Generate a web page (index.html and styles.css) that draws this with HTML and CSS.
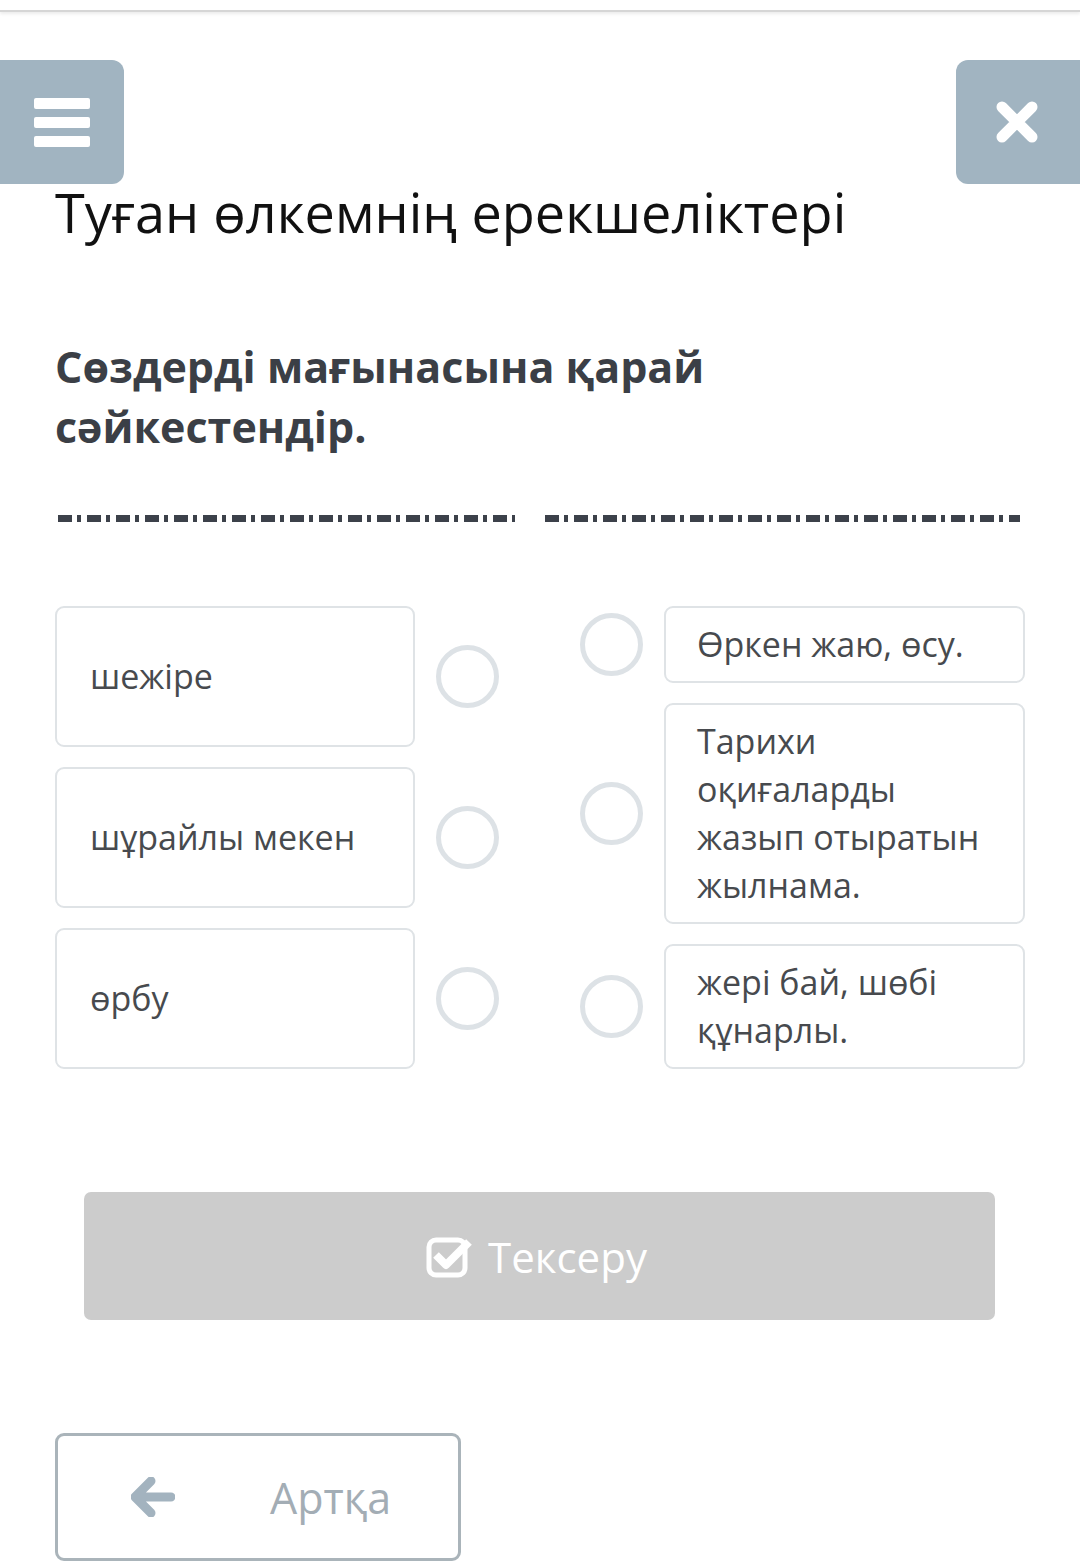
FILE: index.html
```html
<!DOCTYPE html>
<html lang="kk">
<head>
  <meta charset="UTF-8">
  <meta name="viewport" content="width=device-width, initial-scale=1.0">
  <title>Туған өлкемнің ерекшеліктері</title>
  <link rel="stylesheet" href="styles.css">
</head>
<body>
  <div class="topbar"></div>

  <!-- Header buttons -->
  <header class="header">
    <button class="icon-btn menu-btn" aria-label="Menu">
      <span></span><span></span><span></span>
    </button>
    <button class="icon-btn close-btn" aria-label="Close">
      <svg width="44" height="44" viewBox="0 0 44 44">
        <path d="M7 7 L37 37 M37 7 L7 37" stroke="#fff" stroke-width="11" stroke-linecap="round"/>
      </svg>
    </button>
  </header>

  <main class="content">
    <h1 class="title">Туған өлкемнің ерекшеліктері</h1>
    <h2 class="task">Сөздерді мағынасына қарай сәйкестендір.</h2>

    <div class="dashes">
      <div class="dash-line short"></div>
      <div class="dash-line long"></div>
    </div>

    <!-- Matching columns -->
    <div class="match">
      <div class="match-col left">
        <div class="match-row">
          <div class="card card-fixed">шежіре</div>
          <span class="dot"></span>
        </div>
        <div class="match-row">
          <div class="card card-fixed">шұрайлы мекен</div>
          <span class="dot"></span>
        </div>
        <div class="match-row">
          <div class="card card-fixed">өрбу</div>
          <span class="dot"></span>
        </div>
      </div>

      <div class="match-col right">
        <div class="match-row">
          <span class="dot"></span>
          <div class="card">Өркен жаю, өсу.</div>
        </div>
        <div class="match-row">
          <span class="dot"></span>
          <div class="card">Тарихи оқиғаларды жазып отыратын жылнама.</div>
        </div>
        <div class="match-row">
          <span class="dot"></span>
          <div class="card">жері бай, шөбі құнарлы.</div>
        </div>
      </div>
    </div>

    <button class="check-btn">
      <svg width="48" height="44" viewBox="0 0 48 44">
        <rect x="3" y="6" width="36" height="35" rx="7" fill="none" stroke="#fff" stroke-width="5"/>
        <path d="M10 21 L20 31 L43 8" fill="none" stroke="#fff" stroke-width="8" stroke-linejoin="round"/>
      </svg>
      <span>Тексеру</span>
    </button>

    <button class="back-btn">
      <svg width="44" height="40" viewBox="0 0 44 40">
        <path d="M20 4 L4 20 L20 36 M6 20 L40 20" fill="none" stroke="#a3b3bf" stroke-width="9" stroke-linecap="round" stroke-linejoin="round"/>
      </svg>
      <span>Артқа</span>
    </button>
  </main>
</body>
</html>
```

FILE: styles.css
```css
* {
  margin: 0;
  padding: 0;
  box-sizing: border-box;
}

body {
  font-family: 'Open Sans', 'Noto Sans', sans-serif;
  background: #fff;
  width: 1080px;
  min-height: 1566px;
  overflow: hidden;
}

.topbar {
  height: 12px;
  border-bottom: 2px solid #d6d6d6;
  box-shadow: 0 2px 3px rgba(0, 0, 0, 0.08);
}

.header {
  display: flex;
  justify-content: space-between;
  margin-top: 48px;
}

.icon-btn {
  width: 124px;
  height: 124px;
  border: none;
  background: #a1b4c1;
  display: flex;
  align-items: center;
  justify-content: center;
}

.menu-btn {
  border-radius: 0 12px 12px 0;
  flex-direction: column;
  gap: 8px;
}

.menu-btn span {
  display: block;
  width: 56px;
  height: 11px;
  background: #fff;
  border-radius: 2px;
}

.close-btn {
  border-radius: 12px 0 0 12px;
  padding-right: 2px;
}

.content {
  padding: 0 55px;
}

.title {
  margin-top: -2px;
  font-weight: 400;
  font-size: 54px;
  line-height: 60px;
  color: #111;
}

.task {
  margin-top: 95px;
  font-weight: 700;
  font-size: 43px;
  line-height: 60px;
  color: #3b3f46;
  width: 720px;
}

/* garbled divider line */
.dashes {
  display: flex;
  gap: 30px;
  margin-top: 58px;
  padding-left: 3px;
}

.dash-line {
  height: 7px;
  background:
    repeating-linear-gradient(90deg, #3c414a 0 14px, transparent 14px 19px, #3c414a 19px 23px, transparent 23px 29px),
    #fff;
}

.dash-line.short {
  width: 457px;
}

.dash-line.long {
  width: 475px;
}

.match {
  display: flex;
  justify-content: space-between;
  align-items: flex-start;
  margin-top: 84px;
}

.match-col {
  display: flex;
  flex-direction: column;
  gap: 20px;
}

.match-row {
  display: flex;
  align-items: center;
  gap: 21px;
}

.card {
  width: 361px;
  border: 2px solid #dfe3e6;
  border-radius: 9px;
  padding: 12px 28px 13px 31px;
  font-size: 34px;
  line-height: 48px;
  color: #474a4e;
  background: #fff;
}

.card-fixed {
  width: 360px;
  height: 141px;
  display: flex;
  align-items: center;
  padding-left: 33px;
}

.dot {
  width: 63px;
  height: 63px;
  border: 5px solid #dde2e6;
  border-radius: 50%;
  flex-shrink: 0;
}

.check-btn {
  display: flex;
  align-items: center;
  justify-content: center;
  gap: 14px;
  width: 911px;
  height: 128px;
  margin: 123px 0 0 29px;
  border: none;
  border-radius: 7px;
  background: #cccccc;
  color: #fff;
  font-family: inherit;
  font-size: 42px;
  padding-right: 6px;
}

.back-btn {
  display: flex;
  align-items: center;
  gap: 95px;
  width: 406px;
  height: 128px;
  margin-top: 113px;
  padding-left: 73px;
  border: 3px solid #aab4ba;
  border-radius: 9px;
  background: #fff;
  color: #a3adb5;
  font-family: inherit;
  font-size: 43px;
}
```
